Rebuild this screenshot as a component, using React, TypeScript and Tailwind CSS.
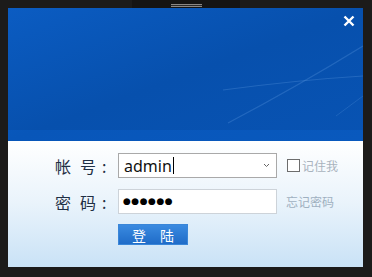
import React from "react";

const font = { fontFamily: '"Noto Sans CJK SC", "Liberation Sans", sans-serif' };

const Label = ({ a, b }: { a: string; b: string }) => (
  <div className="flex w-[63px] items-center text-[16px] leading-none text-[#1f2f44]" style={font}>
    <span>{a}</span>
    <span className="ml-[9px]">{b}</span>
    <span className="ml-[6px]">:</span>
  </div>
);

export default function App() {
  return (
    <div className="relative h-[277px] w-[372px] overflow-hidden bg-[#1c1b1a] pl-[8px] pt-[8px]" style={font}>
      {/* top grip tab */}
      <div className="absolute left-[132px] top-0 flex h-[11px] w-[108px] items-start justify-center rounded-b-[3px] bg-[#151413]">
        <div className="mt-[4px] h-[3px] w-[31px] border-y border-[#8a8784] bg-[#2a2928]" />
      </div>

      <div className="w-[355px]">
        {/* blue banner */}
        <div className="relative h-[133px] bg-gradient-to-br from-[#0b5cc2] via-[#0750ad] to-[#0853b3]">
          <svg className="absolute inset-0" width="355" height="133" viewBox="0 0 355 133">
            <path d="M220 115 Q290 78 355 38" stroke="#5f9be0" strokeOpacity="0.3" strokeWidth="1.2" fill="none" />
            <path d="M215 82 Q290 72 355 68" stroke="#5f9be0" strokeOpacity="0.3" strokeWidth="1.2" fill="none" />
            <path d="M328 108 L355 88" stroke="#5f9be0" strokeOpacity="0.25" strokeWidth="1" fill="none" />
            <rect x="0" y="122" width="355" height="11" fill="#0e66d6" fillOpacity="0.3" />
          </svg>
          <button className="absolute right-[8px] top-[7px] text-white">
            <svg width="12" height="12" viewBox="0 0 12 12">
              <path d="M1.5 1.5 L10.5 10.5 M10.5 1.5 L1.5 10.5" stroke="#fff" strokeWidth="2.4" />
            </svg>
          </button>
        </div>

        {/* form panel */}
        <div className="h-[126px] bg-gradient-to-b from-[#ffffff] via-[#e9f3fb] to-[#c9e2f6] pl-[47px] pt-[12px]">
          <div className="flex items-center">
            <Label a="帐" b="号" />
            <div className="flex h-[25px] w-[159px] items-center border border-[#a9a9a9] bg-white pl-[5px] pr-[6px]">
              <span className="text-[16px] leading-none text-[#111]" style={{ fontFamily: '"Noto Sans", sans-serif' }}>admin</span>
              <span className="ml-[1px] h-[17px] w-[1px] bg-black" />
              <svg className="ml-auto" width="7" height="5" viewBox="0 0 7 5">
                <path d="M1 1 L3.5 3.5 L6 1" stroke="#666" strokeWidth="1" fill="none" />
              </svg>
            </div>
            <div className="ml-[10px] flex items-center text-[12px] text-[#a9b3bd]">
              <span className="h-[13px] w-[13px] border border-[#6d6d6d] bg-white" />
              <span className="ml-[2px]">记住我</span>
            </div>
          </div>

          <div className="mt-[11px] flex items-center">
            <Label a="密" b="码" />
            <div className="flex h-[25px] w-[159px] items-center border border-[#cdd3d9] bg-white pl-[4px]">
              <span className="text-[9px] leading-none tracking-[0.5px] text-black" style={{ fontFamily: '"DejaVu Sans", sans-serif' }}>●●●●●●</span>
            </div>
            <span className="ml-[9px] text-[12px] text-[#9fb0c0]">忘记密码</span>
          </div>

          <div className="ml-[63px] mt-[10px]">
            <button className="flex h-[21px] w-[70px] items-center justify-center border border-[#3a86d8] bg-gradient-to-b from-[#3a8ae0] to-[#1f6cc8] text-[14px] leading-none text-white">
              <span>登</span>
              <span className="ml-[14px]">陆</span>
            </button>
          </div>
        </div>
      </div>
    </div>
  );
}
